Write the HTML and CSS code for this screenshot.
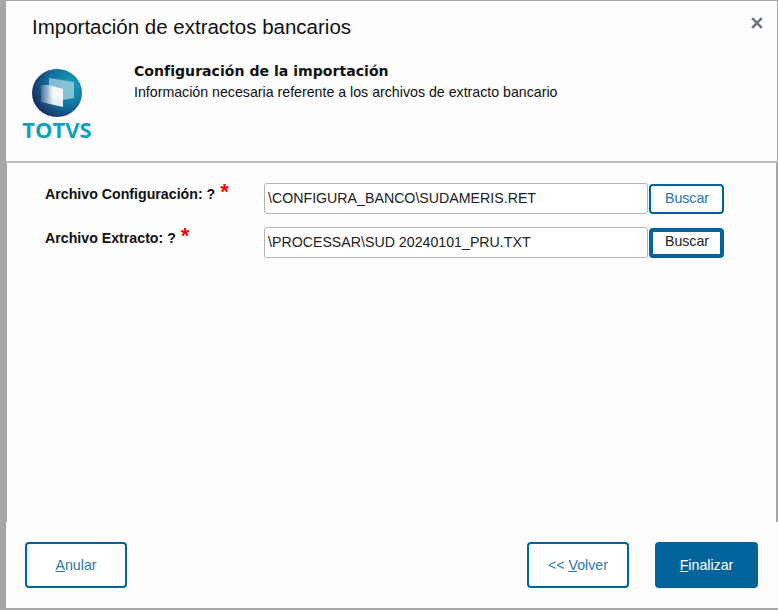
FILE: index.html
```html
<!DOCTYPE html>
<html lang="es">
<head>
  <meta charset="UTF-8">
  <title>Importación de extractos bancarios</title>
  <link rel="stylesheet" href="styles.css">
</head>
<body>
  <div class="dialog">
    <div class="head">
      <div class="close">
        <svg width="12" height="12" viewBox="0 0 12 12"><path d="M1.2 1.2 L10.8 10.8 M10.8 1.2 L1.2 10.8" stroke="#6f7680" stroke-width="2.6" fill="none"/></svg>
      </div>
      <div class="title">Importación de extractos bancarios</div>
      <div class="head-info">
        <div class="logo">
          <svg width="52" height="50" viewBox="0 0 52 50">
            <defs>
              <radialGradient id="ball" cx="75%" cy="35%" r="85%">
                <stop offset="0" stop-color="#14a2bf"/>
                <stop offset="0.5" stop-color="#13709d"/>
                <stop offset="1" stop-color="#1c2157"/>
              </radialGradient>
              <linearGradient id="leaf" x1="0" y1="0" x2="1" y2="0">
                <stop offset="0" stop-color="#4f709f"/>
                <stop offset="0.55" stop-color="#ffffff"/>
                <stop offset="1" stop-color="#ffffff"/>
              </linearGradient>
              <filter id="soft"><feGaussianBlur stdDeviation="0.7"/></filter>
            </defs>
            <ellipse cx="26" cy="25" rx="25" ry="24" fill="url(#ball)"/>
            <g filter="url(#soft)">
              <path d="M18 10 L43 14 L43 30 L32 32 L18 30 Z" fill="#a9d2e0" opacity="0.75"/>
              <path d="M10 17 L18 17 L32 21 L32 39 L10 34 Z" fill="url(#leaf)" opacity="0.9"/>
            </g>
          </svg>
          <div class="logo-name">TOTVS</div>
        </div>
        <div class="head-text">
          <div class="head-title">Configuración de la importación</div>
          <div class="head-sub">Información necesaria referente a los archivos de extracto bancario</div>
        </div>
      </div>
    </div>
    <div class="body">
      <div class="row">
        <label class="lbl">Archivo Configuración: ? <span class="req">*</span></label>
        <input class="txt" type="text" value="\CONFIGURA_BANCO\SUDAMERIS.RET">
        <button class="btn-find">Buscar</button>
      </div>
      <div class="row">
        <label class="lbl">Archivo Extracto: ? <span class="req">*</span></label>
        <input class="txt" type="text" value="\PROCESSAR\SUD 20240101_PRU.TXT">
        <button class="btn-find focus">Buscar</button>
      </div>
    </div>
    <div class="foot">
      <button class="btn"><u>A</u>nular</button>
      <div class="foot-right">
        <button class="btn">&lt;&lt; <u>V</u>olver</button>
        <button class="btn primary"><u>F</u>inalizar</button>
      </div>
    </div>
  </div>
</body>
</html>
```

FILE: styles.css
```css
* {
  margin: 0;
  padding: 0;
  box-sizing: border-box;
}
html,
body {
  width: 778px;
  height: 610px;
  overflow: hidden;
}
body {
  font-family: "Liberation Sans", Arial, sans-serif;
  color: #111;
  padding: 1px 0 2px 6px;
  background-color: #a6a6a6;
}
.dialog {
  position: relative;
  display: flex;
  flex-direction: column;
  height: 100%;
}
.head {
  height: 162px;
  margin-right: 1px;
  padding: 14px 0 0 26px;
  border-bottom: 2px solid #bcbebe;
  background-color: #fdfdfd;
}
.close {
  position: absolute;
  right: 15px;
  top: 16px;
  line-height: 0;
}
.title {
  font-size: 20.5px;
  line-height: 24px;
}
.head-info {
  display: flex;
  margin-top: 22px;
  margin-left: -10px;
}
.logo {
  width: 70px;
  display: flex;
  flex-direction: column;
  align-items: center;
  margin-top: 7px;
}
.logo-name {
  font-family: "Open Sans", sans-serif;
  font-weight: bold;
  font-size: 22px;
  line-height: 20px;
  margin-top: 1px;
  color: #11a0bf;
}
.head-text {
  margin-left: 42px;
}
.head-title {
  font-family: "DejaVu Sans", sans-serif;
  font-weight: bold;
  font-size: 14.1px;
  line-height: 20px;
}
.head-sub {
  margin-top: 2px;
  font-size: 14.2px;
  line-height: 18px;
}
.body {
  flex: 1;
  margin: 0 2px 0 1px;
  padding: 20px 0 0 38px;
  display: flex;
  flex-direction: column;
  gap: 13px;
  background-color: #fdfdfd;
}
.row {
  display: flex;
  height: 31px;
  align-items: center;
}
.lbl {
  width: 219px;
  font-size: 14.2px;
  font-weight: bold;
  align-self: flex-start;
  line-height: 20px;
  padding-top: 1px;
}
.req {
  color: #f00;
  font-size: 22px;
  line-height: 14px;
  margin-left: 1px;
}
.txt {
  width: 384px;
  height: 31px;
  padding: 0 3px 1px;
  border: 1px solid #b4b4b4;
  border-radius: 3px;
  background-color: #fff;
  font-family: "Liberation Sans", Arial, sans-serif;
  font-size: 14.2px;
  color: #222;
  outline: none;
}
.btn-find {
  width: 75px;
  height: 30px;
  margin-left: 1px;
  padding: 0 0 1px 1px;
  border: 2px solid #00649b;
  border-radius: 4px;
  background-color: #fff;
  color: #1f73a8;
  font-family: "Liberation Sans", Arial, sans-serif;
  font-size: 14.2px;
}
.btn-find.focus {
  padding-bottom: 3px;
  border-width: 4px;
  color: #222;
}
.foot {
  display: flex;
  justify-content: space-between;
  height: 86px;
  padding: 20px 20px 0 19px;
  background-color: #fdfdfd;
}
.foot-right {
  display: flex;
  gap: 26px;
}
.btn {
  width: 102px;
  height: 46px;
  border: 2px solid #00649b;
  border-radius: 4px;
  background-color: #fff;
  color: #2a78ab;
  font-family: "Liberation Sans", Arial, sans-serif;
  font-size: 14.2px;
}
.btn.primary {
  width: 103px;
  background-color: #00649b;
  color: #fff;
}
```
